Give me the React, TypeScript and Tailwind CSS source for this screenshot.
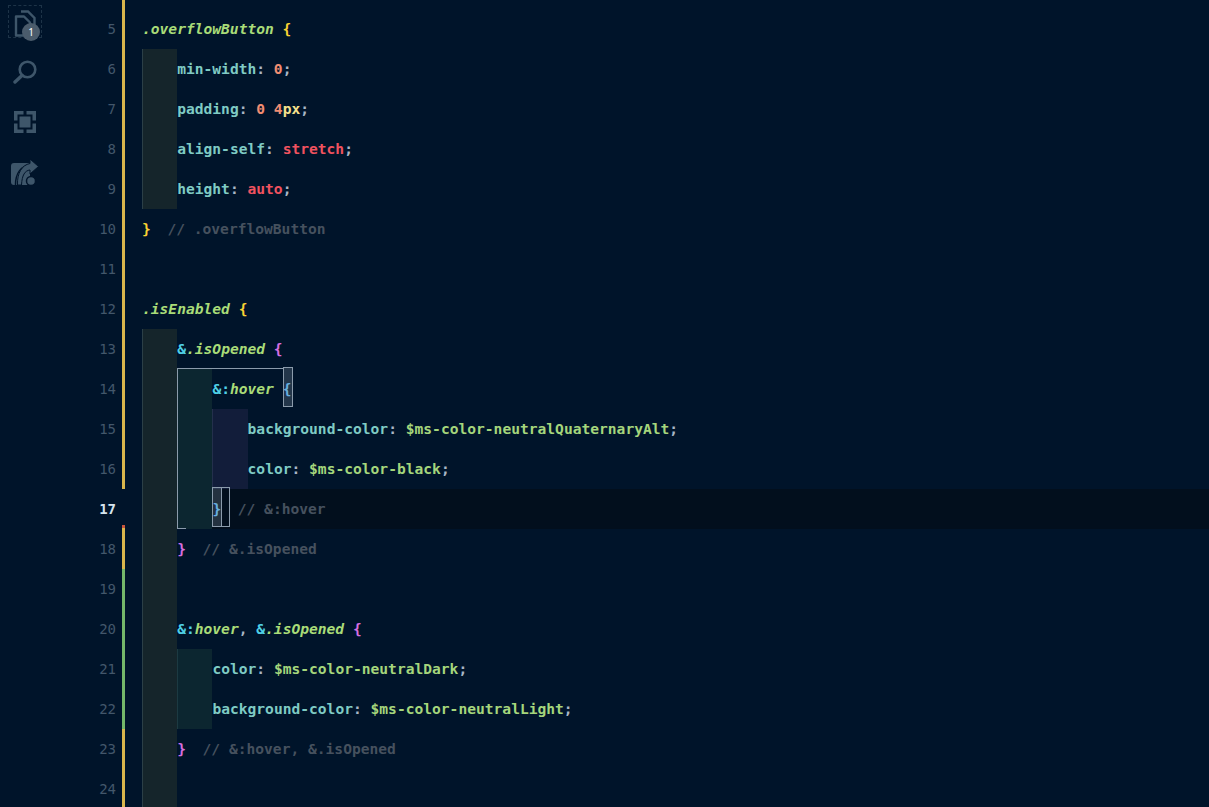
import type { ReactNode } from 'react';

const PROP = 'text-[#7fcbc4]';
const VAR = 'text-[#a5d67c]';
const PUNCT = 'text-[#a9b7c6]';
const COMMENT = 'text-[#46515e] -ml-[1px]';
const AMP = 'text-[#4fd0e6]';
const SEL = 'text-[#a9dc78] italic';
const NUM = 'text-[#f08d72]';
const KEY = 'text-[#f0525f]';
const YELLOW = 'text-[#f8d133]';
const PINK = 'text-[#d56ee0]';
const BLUE = 'text-[#5cb4ee]';

function S({ c, children }: { c: string; children: ReactNode }) {
  return <span className={c}>{children}</span>;
}

type Tone = 'gray' | 'teal' | 'navy';

// one indent guide column, 4 chars wide
function Guide({ tone, children }: { tone: Tone; children?: ReactNode }) {
  const bg =
    tone === 'gray'
      ? 'bg-[#15252b] border-l border-[#2b3f47]'
      : tone === 'teal'
        ? 'bg-[#0c2630] border-l border-[#1c3a42]'
        : 'bg-[#121d3a] border-l border-[#24304c]';
  return <span className={`relative h-10 w-[35.2px] shrink-0 ${bg}`}>{children}</span>;
}

function Decl({ name, children }: { name: string; children: ReactNode }) {
  return (
    <>
      <S c={PROP}>{name}</S>
      <S c={PUNCT}>: </S>
      {children}
      <S c={PUNCT}>;</S>
    </>
  );
}

type Line = {
  n: number;
  bar: string;
  guides?: Tone[];
  active?: boolean;
  outline?: 'start' | 'end';
  notch?: boolean;
  code?: ReactNode;
};

const YBAR = 'bg-[#d9b64c]';
const GBAR = 'bg-[#74b86a]';
const MATCH = 'absolute left-0 top-[-11px] h-10 w-[10px] border border-[#8b9bab] bg-[#8b9bab]/25';

const lines: Line[] = [
  { n: 5, bar: YBAR, code: <><S c={SEL}>.overflowButton</S> <S c={YELLOW}>{'{'}</S></> },
  { n: 6, bar: YBAR, guides: ['gray'], code: <Decl name="min-width"><S c={NUM}>0</S></Decl> },
  {
    n: 7,
    bar: YBAR,
    guides: ['gray'],
    code: <Decl name="padding"><S c={NUM}>0 4</S><S c="text-[#f5e08c]">px</S></Decl>,
  },
  { n: 8, bar: YBAR, guides: ['gray'], code: <Decl name="align-self"><S c={KEY}>stretch</S></Decl> },
  { n: 9, bar: YBAR, guides: ['gray'], code: <Decl name="height"><S c={KEY}>auto</S></Decl> },
  {
    n: 10,
    bar: YBAR,
    code: <><S c={YELLOW}>{'}'}</S>  <S c={COMMENT}>// .overflowButton</S></>,
  },
  { n: 11, bar: YBAR },
  { n: 12, bar: YBAR, code: <><S c={SEL}>.isEnabled</S> <S c={YELLOW}>{'{'}</S></> },
  {
    n: 13,
    bar: YBAR,
    guides: ['gray'],
    code: <><S c={AMP}>&amp;</S><S c={SEL}>.isOpened</S> <S c={PINK}>{'{'}</S></>,
  },
  {
    n: 14,
    bar: YBAR,
    guides: ['gray', 'teal'],
    outline: 'start',
    code: (
      <>
        <S c={AMP}>&amp;:</S><S c={SEL}>hover</S>{' '}
        <span className="relative inline-block">
          <S c={BLUE}>{'{'}</S>
          <span className={MATCH} />
        </span>
      </>
    ),
  },
  {
    n: 15,
    bar: YBAR,
    guides: ['gray', 'teal', 'navy'],
    code: (
      <Decl name="background-color"><S c={VAR}>$ms-color-neutralQuaternaryAlt</S></Decl>
    ),
  },
  {
    n: 16,
    bar: YBAR,
    guides: ['gray', 'teal', 'navy'],
    code: <Decl name="color"><S c={VAR}>$ms-color-black</S></Decl>,
  },
  {
    n: 17,
    bar: 'bg-transparent',
    active: true,
    guides: ['gray', 'teal'],
    outline: 'end',
    code: (
      <>
        <span className="relative inline-block">
          <S c={BLUE}>{'}'}</S>
          <span className={MATCH} />
          <span className="absolute left-[9px] top-[-11px] h-10 w-[9px] border border-[#8b9bab]" />
        </span>
        {'  '}
        <S c={COMMENT}>// &amp;:hover</S>
      </>
    ),
  },
  {
    n: 18,
    bar: YBAR,
    guides: ['gray'],
    notch: true,
    code: <><S c={PINK}>{'}'}</S>  <S c={COMMENT}>// &amp;.isOpened</S></>,
  },
  { n: 19, bar: GBAR, guides: ['gray'] },
  {
    n: 20,
    bar: GBAR,
    guides: ['gray'],
    code: (
      <>
        <S c={AMP}>&amp;:</S><S c={SEL}>hover</S><S c={PUNCT}>, </S>
        <S c={AMP}>&amp;</S><S c={SEL}>.isOpened</S> <S c={PINK}>{'{'}</S>
      </>
    ),
  },
  {
    n: 21,
    bar: GBAR,
    guides: ['gray', 'teal'],
    code: <Decl name="color"><S c={VAR}>$ms-color-neutralDark</S></Decl>,
  },
  {
    n: 22,
    bar: GBAR,
    guides: ['gray', 'teal'],
    code: <Decl name="background-color"><S c={VAR}>$ms-color-neutralLight</S></Decl>,
  },
  {
    n: 23,
    bar: YBAR,
    guides: ['gray'],
    code: <><S c={PINK}>{'}'}</S>  <S c={COMMENT}>// &amp;:hover, &amp;.isOpened</S></>,
  },
  { n: 24, bar: YBAR, guides: ['gray'] },
];

function ActivityBar() {
  return (
    <aside className="flex w-[50px] shrink-0 flex-col items-center text-[#3e566a]">
      <div className="relative mt-[5px] flex h-[33px] w-[34px] items-center justify-center border border-dashed border-[#1d3347]">
        <svg className="mt-1" width="22" height="28" viewBox="0 0 22 28" fill="none" stroke="currentColor" strokeWidth="2.4">
          <path d="M7 1.500h7l6.500 6.500v12" />
          <path d="M2 6.500h8l6 6v13H2z" strokeLinejoin="round" />
        </svg>
        <span className="absolute left-[13px] top-[17px] flex h-[18px] w-[18px] items-center justify-center rounded-full bg-[#4b5c6c] text-[10px] text-white">
          1
        </span>
      </div>
      <svg className="mt-[22px]" width="24" height="24" viewBox="0 0 24 24" fill="none" stroke="currentColor">
        <circle cx="14.500" cy="9.500" r="7.800" strokeWidth="2.600" />
        <path d="M9 15.500 2 22" strokeWidth="3.400" strokeLinecap="round" />
      </svg>
      <svg className="mt-[27px]" width="22" height="22" viewBox="0 0 22 22" fill="currentColor">
        <path d="M0 0h9.500v3.500h-6v6H0zM12.500 0H22v9.500h-3.500v-6h-6zM0 12.500h3.500v6h6V22H0zM22 12.500V22h-9.500v-3.500h6v-6zM5.500 5.500h11v11h-11z" />
      </svg>
      <svg className="mt-[25px]" width="28" height="28" viewBox="0 0 28 28" fill="currentColor">
        <path d="M3 5h16v22H3a3 3 0 0 1-3-3V8a3 3 0 0 1 3-3z" />
        <path d="M4.500 27C4.500 15 10 8 19 7" fill="none" stroke="#00142a" strokeWidth="1.500" />
        <path d="M19 1l8.500 7.500L19 16v-4C14 12.500 11 17 10.500 27h-4C6 15 11 7 19 5.500z" stroke="#00142a" strokeWidth="1" />
        <circle cx="20" cy="23" r="4.500" stroke="#00142a" strokeWidth="1.500" />
      </svg>
    </aside>
  );
}

export default function App() {
  return (
    <div className="flex h-[807px] w-[1209px] overflow-hidden bg-[#00142a]">
      <ActivityBar />
      <main
        className="min-w-0 flex-1 overflow-hidden text-[14.6px] font-semibold"
        style={{ fontFamily: '"DejaVu Sans Mono", monospace' }}
      >
        <div className="flex h-[9px]">
          <span className="w-[72px] shrink-0" />
          <span className={`w-[3px] shrink-0 ${YBAR}`} />
        </div>
        {lines.map((l) => (
          <div key={l.n} className="flex h-10 items-center whitespace-pre">
            <span
              className={`w-[72px] shrink-0 pr-[6px] text-right text-[14px] ${
                l.active ? 'font-bold text-[#d6e4ee]' : 'font-normal text-[#43576a]'
              }`}
            >
              {l.n}
            </span>
            <span className={`relative h-10 w-[3px] shrink-0 ${l.bar}`}>
              {l.notch && (
                <>
                  <span className={`absolute left-0 top-[-3px] h-[3px] w-[3px] ${YBAR}`} />
                  <span className="absolute left-0 top-[-4px] h-[3px] w-[3px] bg-[#c8553d]" />
                </>
              )}
            </span>
            <span className="w-[17px] shrink-0" />
            <div className={`flex h-10 min-w-0 flex-1 items-center ${l.active ? 'bg-[#020f1d]' : ''}`}>
              {l.guides?.map((g, i) => (
                <Guide key={i} tone={g}>
                  {i === 1 && l.outline === 'start' && (
                    <span className="absolute left-[-1px] top-[-1px] z-10 h-[161px] w-[106px] border-l border-t border-[#8b9bab]" />
                  )}
                  {i === 1 && l.outline === 'end' && (
                    <span className="absolute bottom-0 left-[-1px] z-10 h-px w-[9px] bg-[#8b9bab]" />
                  )}
                </Guide>
              ))}
              {l.code && <span>{l.code}</span>}
            </div>
          </div>
        ))}
      </main>
    </div>
  );
}
